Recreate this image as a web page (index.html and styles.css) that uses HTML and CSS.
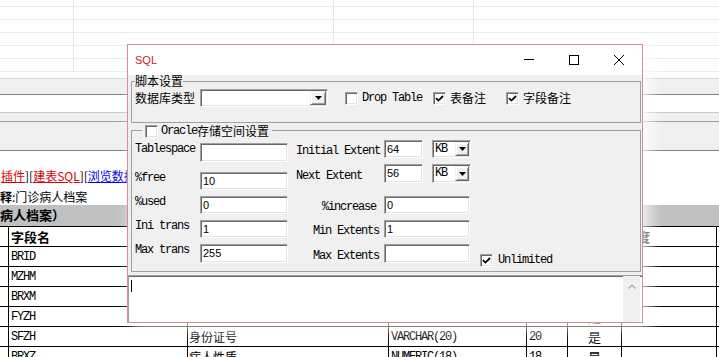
FILE: index.html
```html
<!DOCTYPE html>
<html>
<head>
<meta charset="utf-8">
<link rel="stylesheet" href="styles.css">
</head>
<body>
<div class="page">
  <div class="grid-area"></div>
  <div class="bar1"></div>
  <div class="editrow"></div>
  <div class="panel"><div class="panel-line"></div></div>
  <div class="content">
    <div class="links"><span class="lnk-red">插件</span>][<span class="lnk-red">建表SQL</span>][<span class="lnk-blue">浏览数据</span>]</div>
    <div class="note"><b>释</b>:门诊病人档案</div>
    <div class="caption">病人档案）</div>
    <table class="fields">
      <colgroup><col class="c0"><col class="c1"><col class="c2"><col class="c3"><col class="c4"><col class="c5"><col class="c6"><col class="c7"></colgroup>
      <tr class="thead"><td></td><td>字段名</td><td>字段说明</td><td>类型</td><td>长度</td><td>主键</td><td>精度</td><td>备注</td></tr>
      <tr><td></td><td class="m">BRID</td><td>病人ID</td><td class="m">NUMERIC(18)</td><td class="m">18</td><td class="ctr">是</td><td></td><td></td></tr>
      <tr><td></td><td class="m">MZHM</td><td>门诊号码</td><td class="m">VARCHAR(20)</td><td class="m">20</td><td class="ctr">是</td><td></td><td></td></tr>
      <tr><td></td><td class="m">BRXM</td><td>病人姓名</td><td class="m">VARCHAR(20)</td><td class="m">20</td><td class="ctr">是</td><td></td><td></td></tr>
      <tr><td></td><td class="m">FYZH</td><td>费用账号</td><td class="m">VARCHAR(20)</td><td class="m">20</td><td class="ctr">是</td><td></td><td></td></tr>
      <tr><td></td><td class="m">SFZH</td><td class="cn">身份证号</td><td class="m">VARCHAR(20)</td><td class="m">20</td><td class="ctr">是</td><td></td><td></td></tr>
      <tr><td></td><td class="m">BRXZ</td><td class="cn">病人性质</td><td class="m">NUMERIC(18)</td><td class="m">18</td><td class="ctr">是</td><td></td><td></td></tr>
    </table>
  </div>
</div>

<div class="dialog">
  <div class="titlebar">
    <span class="title">SQL</span>
    <div class="winbtns">
      <span class="wbtn"><svg width="10" height="10" viewBox="0 0 10 10"><line x1="0" y1="4.5" x2="10" y2="4.5" stroke="#000" stroke-width="1"/></svg></span>
      <span class="wbtn"><svg width="10" height="10" viewBox="0 0 10 10"><rect x="0.5" y="0.5" width="9" height="9" fill="none" stroke="#000" stroke-width="1"/></svg></span>
      <span class="wbtn"><svg width="10" height="10" viewBox="0 0 10 10"><path d="M0 0L10 10M10 0L0 10" fill="none" stroke="#000" stroke-width="1"/></svg></span>
    </div>
  </div>
  <div class="dlg-body">
    <div class="groups">
      <fieldset class="grp grp-script">
        <legend class="grp-legend">脚本设置</legend>
        <div class="row-script">
          <span class="cn-label db-label">数据库类型</span>
          <span class="combo combo-db"><span class="drop"><svg width="7" height="4" viewBox="0 0 7 4"><path d="M0 0H7L3.5 4Z" fill="#000"/></svg></span></span>
          <span class="chk chk-drop"></span><span class="mono-label chk-text">Drop Table</span>
          <span class="chk chk-tbl"><svg width="9" height="9" viewBox="0 0 9 9"><path d="M1 4.2L3.4 6.6L8 2" fill="none" stroke="#000" stroke-width="1.8"/></svg></span><span class="cn-label chk-text">表备注</span>
          <span class="chk chk-fld"><svg width="9" height="9" viewBox="0 0 9 9"><path d="M1 4.2L3.4 6.6L8 2" fill="none" stroke="#000" stroke-width="1.8"/></svg></span><span class="cn-label chk-text">字段备注</span>
        </div>
      </fieldset>
      <fieldset class="grp grp-oracle">
        <legend class="legend-oracle"><span class="chk"></span><span class="mono-label oracle-word">Oracle</span><span class="cn-label">存储空间设置</span></legend>
        <div class="oracle-cols">
          <div class="ocol-left">
            <div class="orow l1"><span class="olabel">Tablespace</span><span class="edit edit-l h19"></span></div>
            <div class="orow l2"><span class="olabel">%free</span><span class="edit edit-l">10</span></div>
            <div class="orow l3"><span class="olabel">%used</span><span class="edit edit-l">0</span></div>
            <div class="orow l4"><span class="olabel">Ini trans</span><span class="edit edit-l">1</span></div>
            <div class="orow l5"><span class="olabel">Max trans</span><span class="edit edit-l h19">255</span></div>
          </div>
          <div class="ocol-right">
            <div class="rrow r1"><span class="rlabel">Initial Extent</span><span class="edit edit-s">64</span><span class="combo combo-kb"><span class="kb">KB</span><span class="drop drop-kb"><svg width="7" height="4" viewBox="0 0 7 4"><path d="M0 0H7L3.5 4Z" fill="#000"/></svg></span></span></div>
            <div class="rrow r2"><span class="rlabel">Next Extent</span><span class="edit edit-s h19">56</span><span class="combo combo-kb h19"><span class="kb">KB</span><span class="drop drop-kb"><svg width="7" height="4" viewBox="0 0 7 4"><path d="M0 0H7L3.5 4Z" fill="#000"/></svg></span></span></div>
            <div class="rrow r3"><span class="rlabel ind-inc">%increase</span><span class="edit edit-w">0</span></div>
            <div class="rrow r4"><span class="rlabel ind-ext">Min Extents</span><span class="edit edit-w">1</span></div>
            <div class="rrow r5"><span class="rlabel ind-ext">Max Extents</span><span class="edit edit-w h19"></span>
              <span class="unl"><span class="chk"><svg width="9" height="9" viewBox="0 0 9 9"><path d="M1 4.2L3.4 6.6L8 2" fill="none" stroke="#000" stroke-width="1.8"/></svg></span><span class="mono-label unl-text">Unlimited</span></span>
            </div>
          </div>
        </div>
      </fieldset>
    </div>
    <div class="memo">
      <span class="caret"></span>
      <div class="vscroll"><svg width="8" height="5" viewBox="0 0 8 5"><path d="M0.5 4.5L4 1L7.5 4.5" fill="none" stroke="#a8a8a8" stroke-width="1.2"/></svg></div>
    </div>
  </div>
</div>
</body>
</html>
```
FILE: styles.css
```css
* { box-sizing: border-box; }
html, body { margin: 0; padding: 0; }
body {
  width: 719px; height: 357px; overflow: hidden; position: relative;
  background: #fff; color: #000;
  font-family: "Noto Sans CJK SC", "Noto Sans", sans-serif; font-size: 12px;
}
.m { font-family: "Liberation Mono", monospace; font-size: 12px; letter-spacing: -1.2px; }

/* background application */
.grid-area {
  height: 78px; background-color: #fff;
  background-image:
    linear-gradient(#e6e6e6, #e6e6e6), linear-gradient(#e6e6e6, #e6e6e6), linear-gradient(#e6e6e6, #e6e6e6),
    repeating-linear-gradient(to bottom, transparent 0 6px, #ececec 6px 7px, transparent 7px 13px);
  background-size: 1px 72px, 1px 72px, 1px 72px, 100% 100%;
  background-position: 73px 0, 333px 0, 473px 0, 0 0;
  background-repeat: no-repeat;
}
.bar1 { height: 17px; background: #f0f0f0; border-top: 1px solid #d4d4d4; border-bottom: 1px solid #808080; }
.editrow { height: 18px; background: #fff; border-bottom: 1px solid #c8c8c8; }
.panel { height: 38px; background: #f0f0f0; border-bottom: 1px solid #808080; padding-top: 8px; }
.panel-line { border-top: 1px solid #a0a0a0; }

.links { margin-top: 17px; height: 16px; line-height: 16px; padding-left: 1px; white-space: nowrap; }
.lnk-red { color: #e00000; text-decoration: underline; }
.lnk-blue { color: #0000ee; text-decoration: underline; }
.note { margin-top: 5px; height: 16px; line-height: 16px; white-space: nowrap; }
.caption { height: 21px; line-height: 20px; background: #c0c0c0; font-weight: bold; font-size: 13px; white-space: nowrap; }

.fields { border-collapse: collapse; table-layout: fixed; margin-left: -10px; width: 826px; }
.c0 { width: 18px; } .c1 { width: 179px; } .c2 { width: 201px; } .c3 { width: 138px; }
.c4 { width: 41px; } .c5 { width: 54px; } .c6 { width: 95px; } .c7 { width: 100px; }
.fields td {
  border: 1px solid #000; height: 20px; padding: 0 0 0 2px; white-space: nowrap; overflow: hidden;
  line-height: 18px; vertical-align: middle;
}
.fields .thead td { font-weight: bold; font-size: 13px; }
.fields td.cn { padding-left: 1px; }
.fields td.ctr { text-align: center; padding: 0; font-size: 13px; }

/* dialog */
.dialog {
  position: absolute; left: 127px; top: 44px; width: 516px; height: 279px;
  border: 1px solid #dc8c95; background: #f0f0f0;
  box-shadow: 6px 5px 14px 2px rgba(255, 255, 255, 0.75);
  display: flex; flex-direction: column;
}
.titlebar { height: 30px; flex: none; background: #fff; display: flex; align-items: center; }
.title { flex: 1; margin-left: 7px; font-family: "Liberation Sans", sans-serif; font-size: 11px; color: #c8202c; }
.winbtns { display: flex; height: 30px; margin-right: 1px; }
.wbtn { width: 45px; height: 30px; display: flex; align-items: center; justify-content: center; }

.dlg-body { flex: 1; display: flex; flex-direction: column; background: #f0f0f0; }
.groups { padding: 0 1px 0 3px; }
.grp { margin: 0; border: 1px solid #a0a0a0; min-width: 0; }
.grp-script { padding: 2px 0 15px 3px; }
.grp-legend { padding: 0; line-height: 12px; font-size: 12px; white-space: nowrap; }
.grp-oracle { padding: 3px 0 8px 3px; }
.legend-oracle { display: flex; align-items: center; height: 14px; padding: 2px 3px 0 3px; margin-left: 7px; line-height: 12px; }
.oracle-word { margin-left: 3px; }

.cn-label { line-height: 14px; white-space: nowrap; }
.mono-label { font-family: "Liberation Mono", monospace; font-size: 12px; letter-spacing: -1.2px; line-height: 13px; white-space: pre; }

.row-script { display: flex; align-items: center; height: 18px; }
.db-label { width: 60px; margin-right: 5px; }
.chk-text { margin-left: 4px; }
.chk-drop { margin-left: 17px; }
.chk-tbl { margin-left: 11px; }
.chk-fld { margin-left: 20px; }

.chk {
  flex: none; display: inline-flex; align-items: center; justify-content: center;
  width: 13px; height: 13px; background: #fff;
  border: 1px solid; border-color: #a0a0a0 #fff #fff #a0a0a0;
  box-shadow: inset 1px 1px #696969, inset -1px -1px #e3e3e3;
}

.combo {
  flex: none; display: flex; justify-content: flex-end; align-items: stretch;
  height: 18px; padding: 1px; background: #fff;
  border: 1px solid; border-color: #a0a0a0 #fff #fff #a0a0a0;
  box-shadow: inset 1px 1px #696969, inset -1px -1px #e3e3e3;
}
.combo-db { width: 128px; }
.drop {
  width: 16px; display: flex; align-items: center; justify-content: center; background: #f0f0f0;
  border: 1px solid; border-color: #f0f0f0 #696969 #696969 #f0f0f0;
  box-shadow: inset 1px 1px #fff, inset -1px -1px #a0a0a0;
}
.combo-kb { width: 39px; margin-left: 9px; justify-content: space-between; }
.kb { font-family: "Liberation Mono", monospace; font-size: 12px; letter-spacing: -1.2px; line-height: 14px; padding-left: 1px; }
.drop-kb { width: 14px; }

.oracle-cols { display: flex; }
.ocol-left { display: flex; flex-direction: column; width: 153px; }
.ocol-right { display: flex; flex-direction: column; margin-left: 8px; }
.orow { display: flex; align-items: flex-start; }
.rrow { display: flex; align-items: flex-end; }
.olabel, .rlabel { flex: none; font-family: "Liberation Mono", monospace; font-size: 12px; letter-spacing: -1.2px; line-height: 13px; white-space: pre; }
.olabel { width: 65px; }
.rlabel { width: 88px; }
.ind-inc { padding-left: 26px; }
.ind-ext { padding-left: 17px; }
.l1 { margin-top: 3px; } .l2 { margin-top: 10px; } .l3, .l4, .l5 { margin-top: 6px; }
.r2 { margin-top: 6px; } .r3 { margin-top: 13px; } .r4, .r5 { margin-top: 6px; }

.edit {
  flex: none; display: block; height: 18px; background: #fff;
  border: 1px solid; border-color: #a0a0a0 #fff #fff #a0a0a0;
  box-shadow: inset 1px 1px #696969, inset -1px -1px #e3e3e3;
  padding-left: 2px; font-family: "Liberation Sans", sans-serif; font-size: 11px; line-height: 16px;
}
.h19 { height: 19px; }
.edit-l { width: 88px; }
.edit-s { width: 39px; }
.edit-w { width: 86px; }

.unl { display: flex; align-items: center; margin-left: 10px; margin-bottom: -4px; }
.unl-text { margin-left: 5px; }

.memo {
  flex: 1; margin-top: 3px; display: flex; align-items: flex-start; background: #fff;
  border-top: 1px solid #a0a0a0; border-left: 1px solid #a0a0a0;
  box-shadow: inset 0 1px #696969;
}
.caret { width: 1px; height: 12px; background: #000; margin: 4px 0 0 2px; }
.vscroll {
  margin-left: auto; margin-right: 2px; width: 17px; align-self: stretch; background: #f0f0f0;
  display: flex; justify-content: center; padding-top: 8px;
}
```
